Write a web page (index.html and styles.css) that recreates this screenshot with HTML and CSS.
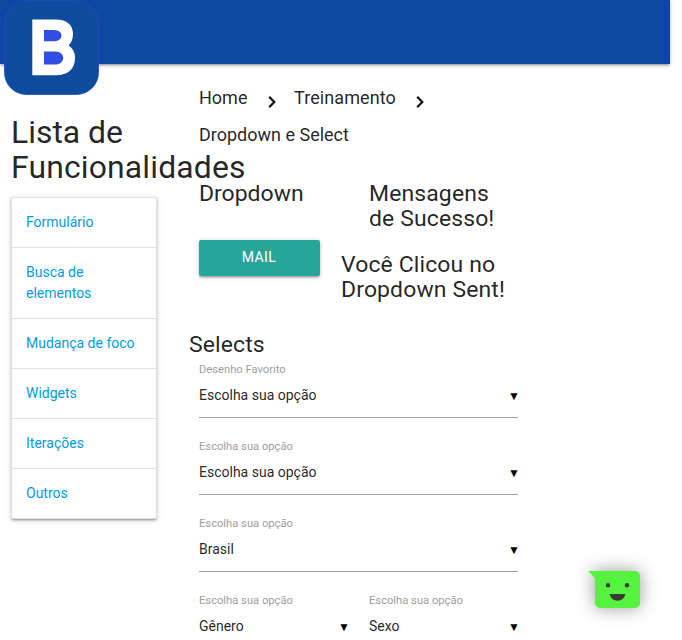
FILE: index.html
```html
<!DOCTYPE html>
<html lang="pt-BR">
<head>
<meta charset="utf-8">
<title>Dropdown e Select</title>
<link rel="stylesheet" href="styles.css">
</head>
<body>
<nav class="topbar">
  <svg class="logo" width="96" height="96" viewBox="0 0 96 96" aria-label="B">
    <rect x=".5" y=".5" width="94" height="94" rx="22" fill="#0f4c9e" stroke="#2248c4" stroke-width=".8"/>
    <path fill="#fff" fill-rule="evenodd" d="M28.300 19.500H52C63 19.500 69 25 69 34C69 39 67.300 43 64.500 45.500C68.500 48 71 52 71 58C71 69 64 75.200 52 75.200H28.300Z"/>
    <path fill="#314ee3" d="M40 30H50C60 30 60 41.300 50 41.300H40ZM40 51.500H51C62 51.500 62 64.600 51 64.600H40Z"/>
  </svg>
</nav>
<div class="layout">
  <aside class="sidebar">
    <h4>Lista de <span class="long">Funcionalidades</span></h4>
    <div class="collection">
      <a>Formulário</a>
      <a>Busca de elementos</a>
      <a>Mudança de foco</a>
      <a>Widgets</a>
      <a>Iterações</a>
      <a>Outros</a>
    </div>
  </aside>
  <main class="content">
    <div class="breadcrumbs">
      <span>Home</span>
      <svg class="chevron" width="8" height="14" viewBox="0 0 8 14"><path d="M1.200 1.800L6.300 7L1.200 12.200"/></svg>
      <span class="course">Treinamento</span>
      <svg class="chevron" width="8" height="14" viewBox="0 0 8 14"><path d="M1.200 1.800L6.300 7L1.200 12.200"/></svg>
      <span class="current">Dropdown e Select</span>
    </div>
    <section class="demo">
      <div class="trigger">
        <h5>Dropdown</h5>
        <button class="btn">MAIL</button>
      </div>
      <div class="messages">
        <h5 class="title">Mensagens<br>de Sucesso!</h5>
        <h5>Você Clicou no<br>Dropdown Sent!</h5>
      </div>
    </section>
    <h5 class="selects-title">Selects</h5>
    <div class="selects">
      <div class="field wide"><label>Desenho Favorito</label><div class="select">Escolha sua opção<span class="caret">▼</span></div></div>
      <div class="field wide"><label>Escolha sua opção</label><div class="select">Escolha sua opção<span class="caret">▼</span></div></div>
      <div class="field wide"><label>Escolha sua opção</label><div class="select">Brasil<span class="caret">▼</span></div></div>
      <div class="field"><label>Escolha sua opção</label><div class="select">Gênero<span class="caret">▼</span></div></div>
      <div class="field"><label>Escolha sua opção</label><div class="select">Sexo<span class="caret">▼</span></div></div>
    </div>
  </main>
</div>
<svg class="chat" width="110" height="110" viewBox="0 0 110 110" aria-label="Chat">
  <path fill="#55f23f" d="M33 31H75a5 5 0 0 1 5 5V63a5 5 0 0 1-5 5H40a5 5 0 0 1-5-5V38L28 31Z"/>
  <g fill="#3b3b3b"><circle cx="48" cy="45.200" r="2.200"/><circle cx="67" cy="45.200" r="2.200"/><path d="M49.700 54H65.300C64.500 58.500 61.500 60.700 57.500 60.700S50.500 58.500 49.700 54Z"/></g>
</svg>
</body>
</html>
```
FILE: styles.css
```css
* { box-sizing: border-box; }
html { font-size: 14px; font-family: Roboto, sans-serif; color: rgba(0,0,0,.87); line-height: 1.5; overflow: hidden; }
body { margin: 0; height: 640px; overflow: hidden; background: #fff; }
h4, h5 { margin: 0; font-weight: 400; line-height: 1.1; }
h4 { font-size: 2.28rem; }
h5 { font-size: 1.64rem; }
.topbar, .collection, .btn {
  box-shadow: 0 2px 2px 0 rgba(0,0,0,.14), 0 3px 1px -2px rgba(0,0,0,.12), 0 1px 5px 0 rgba(0,0,0,.2);
}
.topbar { width: 670px; height: 64px; padding-left: 4px; background: #0d47a1; position: relative; z-index: 1; }
.logo { display: block; overflow: visible; }
.layout { display: flex; width: 670px; padding: 0 11px; gap: 42px; }
.sidebar { width: 146px; padding-top: 51px; }
.long { letter-spacing: .15px; }
.collection { margin-top: 12px; border: 1px solid #e0e0e0; border-radius: 2px; background: #fff; }
.collection a { display: block; padding: 14px; line-height: 21px; color: #039be5; border-bottom: 1px solid #e0e0e0; }
.collection a:last-child { border-bottom: 0; }
.content { width: 320px; padding-top: 15px; }
.breadcrumbs { display: flex; flex-wrap: wrap; font-size: 18px; line-height: 37px; }
.chevron { margin: 16px 18px 0 20.6px; fill: none; stroke: #111; stroke-width: 2.2; }
.course { letter-spacing: .08px; }
.current { flex-basis: 100%; }
.demo { display: flex; height: 151px; margin-top: 28px; }
.trigger { width: 142px; flex: none; }
.btn { display: block; width: 121px; height: 36px; margin-top: 34px; padding: 0 1px 1px 0; border: 0; border-radius: 2px; background: #26a69a; color: #fff; font: 14px/33px Roboto, sans-serif; letter-spacing: .4px; }
.messages { white-space: nowrap; letter-spacing: .13px; }
.messages h5 + h5 { margin-top: 20.6px; }
.title { padding-left: 28px; }
.selects-title { margin-left: -10px; letter-spacing: .13px; }
.selects { display: grid; grid-template-columns: 149px 149px; column-gap: 21px; width: 319px; margin-top: 4px; }
.wide { grid-column: 1 / -1; }
.field { height: 77px; }
.field label { display: block; color: #9e9e9e; font-size: .8rem; line-height: 17px; }
.select { display: flex; justify-content: space-between; height: 40px; line-height: 34px; border-bottom: 1px solid #9e9e9e; }
.caret { font-size: 12px; color: #000; line-height: 37px; margin-right: -2px; }
.chat { position: absolute; left: 560px; top: 540px; filter: drop-shadow(0 0 9px rgba(0,0,0,.4)); }
```
